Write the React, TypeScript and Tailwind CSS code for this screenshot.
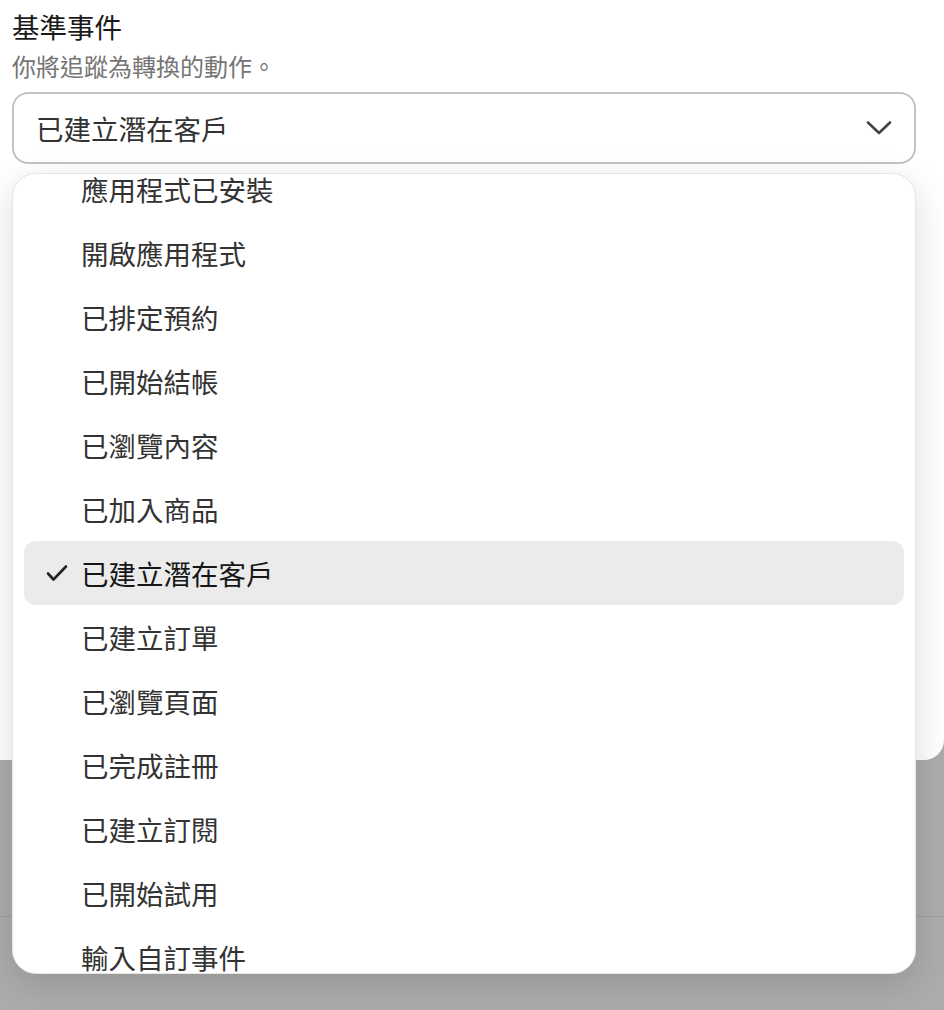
import React from "react";

const items = [
  "應用程式已安裝",
  "開啟應用程式",
  "已排定預約",
  "已開始結帳",
  "已瀏覽內容",
  "已加入商品",
  "已建立潛在客戶",
  "已建立訂單",
  "已瀏覽頁面",
  "已完成註冊",
  "已建立訂閱",
  "已開始試用",
  "輸入自訂事件",
];
const selected = "已建立潛在客戶";

const font = { fontFamily: '"Noto Sans CJK TC", "Noto Sans", sans-serif' };

export default function App() {
  return (
    <div
      className="relative w-[944px] h-[1010px] overflow-hidden bg-[#acacac] flex flex-col"
      style={font}
    >
      <div className="h-[760px] bg-white rounded-br-[20px] px-[12px] pt-[8px] flex flex-col shrink-0">
        <div className="text-[27.5px] leading-[36px] text-[#1a1a1a]">基準事件</div>
        <div className="mt-[6px] text-[24px] leading-[32px] text-[#757575]">你將追蹤為轉換的動作。</div>
        <div className="mt-[10px] h-[72px] w-[904px] border-2 border-[#c4c4c4] rounded-[16px] flex items-center justify-between pl-[22px] pr-[22px]">
          <span className="text-[27.5px] leading-[36px] text-[#333333]">{selected}</span>
          <svg width="26" height="16" viewBox="0 0 26 16" fill="none">
            <path d="M2 2.5 L13 13 L24 2.5" stroke="#444444" strokeWidth="2.6" strokeLinecap="round" strokeLinejoin="round" />
          </svg>
        </div>
      </div>
      <div className="h-[156px] shrink-0" />
      <div className="h-[1px] bg-[#9f9f9f] shrink-0" />

      <div className="absolute left-[12px] top-[173px] w-[904px] h-[801px] bg-white rounded-[24px] border border-[#e6e6e6] shadow-[0_10px_36px_rgba(0,0,0,0.14)] overflow-hidden">
        <div className="mt-[-17px] px-[11px] flex flex-col">
          {items.map((it) => {
            const sel = it === selected;
            return (
              <div
                key={it}
                className={
                  sel
                    ? "h-[64px] rounded-[12px] bg-[#ebebeb] flex items-center pl-[22px] shrink-0"
                    : "h-[64px] rounded-[12px] flex items-center pl-[22px] shrink-0"
                }
              >
                <span className="w-[35px] flex items-center">
                  {sel && (
                    <svg width="22" height="18" viewBox="0 0 22 18" fill="none">
                      <path d="M2 9.5 L7.5 15.5 L20 2.5" stroke="#222222" strokeWidth="2.6" strokeLinecap="round" strokeLinejoin="round" />
                    </svg>
                  )}
                </span>
                <span
                  className={
                    sel
                      ? "text-[27.5px] leading-[36px] text-[#161616]"
                      : "text-[27.5px] leading-[36px] text-[#333333]"
                  }
                >
                  {it}
                </span>
              </div>
            );
          })}
        </div>
      </div>
    </div>
  );
}
